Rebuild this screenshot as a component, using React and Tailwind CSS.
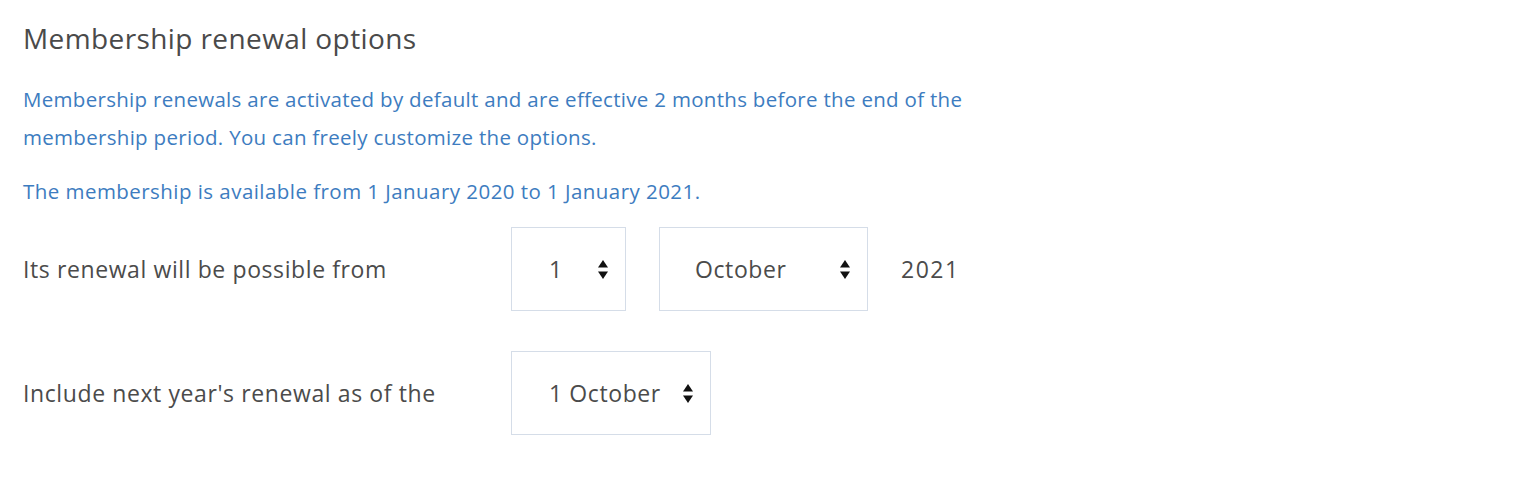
import React from 'react';

const font = { fontFamily: '"Open Sans", Lato, sans-serif' };

function SortIcon() {
  return (
    <svg width="10" height="19" viewBox="0 0 10 19" className="shrink-0">
      <path d="M5 0 L10 7.5 L0 7.5 Z" fill="#111" />
      <path d="M0 11.5 L10 11.5 L5 19 Z" fill="#111" />
    </svg>
  );
}

function Select({ value, width, padLeft }) {
  return (
    <div
      className={`h-[84px] ${width} ${padLeft} pr-[17px] flex items-center justify-between border border-[#d5dde8] bg-white text-[23px] tracking-[0.6px] text-[#4b4b4b]`}
    >
      <span>{value}</span>
      <SortIcon />
    </div>
  );
}

export default function App() {
  return (
    <div className="min-h-[484px] bg-white px-[23px] pt-[22px]" style={font}>
      <h2 className="text-[28px] leading-[32px] tracking-[0.4px] text-[#4a4a4a] font-normal">Membership renewal options</h2>

      <p className="mt-[26px] text-[20.5px] leading-[38px] tracking-[0.3px] text-[#3d7cc0]">
        Membership renewals are activated by default and are effective 2 months before the end of the
        <br />
        membership period. You can freely customize the options.
      </p>
      <p className="mt-[16px] text-[20.5px] leading-[38px] tracking-[0.45px] text-[#3d7cc0]">
        The membership is available from 1 January 2020 to 1 January 2021.
      </p>

      <div className="mt-[17px] flex flex-col gap-[40px]">
        <div className="flex items-center">
          <div className="w-[488px] text-[23px] tracking-[0.6px] text-[#4b4b4b]">Its renewal will be possible from</div>
          <div className="flex items-center gap-[33px]">
            <Select value="1" width="w-[115px]" padLeft="pl-[37px]" />
            <Select value="October" width="w-[209px]" padLeft="pl-[35px]" />
            <span className="text-[23px] tracking-[1.5px] text-[#4b4b4b]">2021</span>
          </div>
        </div>
        <div className="flex items-center">
          <div className="w-[488px] text-[23px] tracking-[0.6px] text-[#4b4b4b]">Include next year's renewal as of the</div>
          <Select value="1 October" width="w-[200px]" padLeft="pl-[37px]" />
        </div>
      </div>
    </div>
  );
}
